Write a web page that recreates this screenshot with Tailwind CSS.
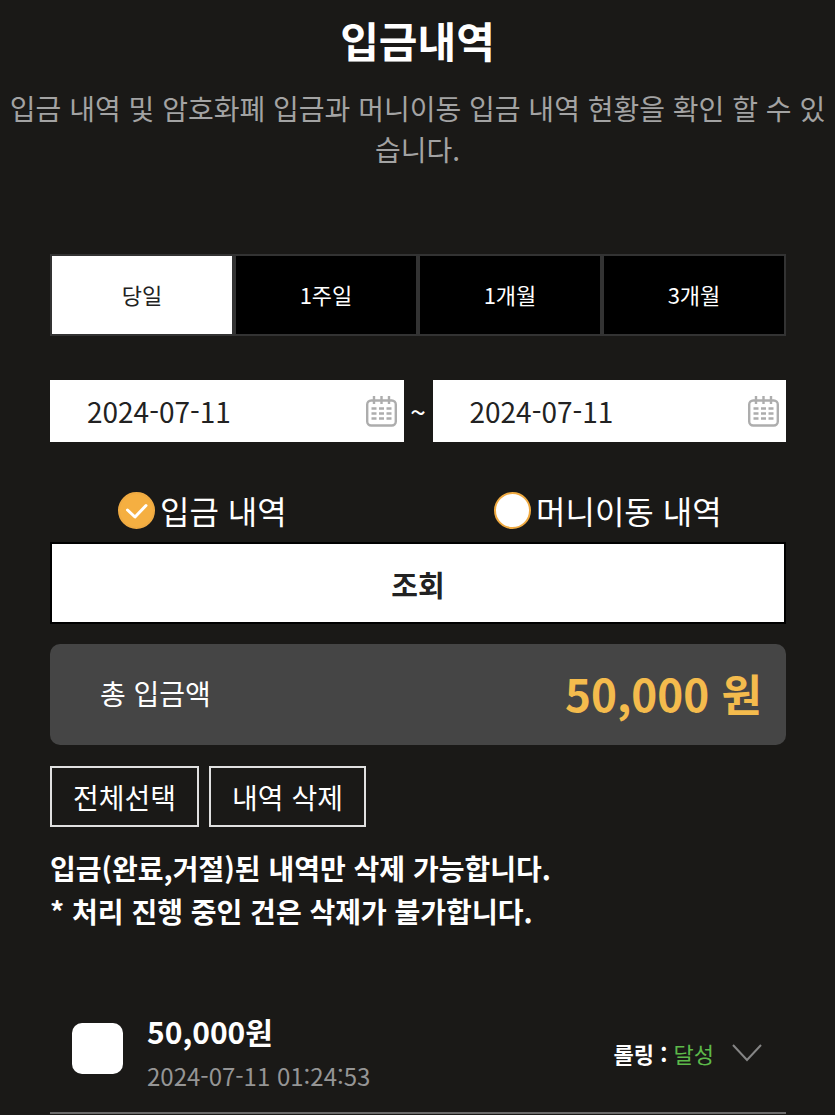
<!DOCTYPE html>
<html lang="ko">
<head>
  <meta charset="UTF-8">
  <meta name="viewport" content="width=device-width, initial-scale=1.0">
  <title>입금내역</title>
  <script src="https://cdn.jsdelivr.net/npm/@tailwindcss/browser@4"></script>
</head>
<body class="bg-[#1a1917] text-white font-['Noto_Sans_CJK_KR',sans-serif]">

  <!-- Title -->
  <header class="pt-[10px] text-center">
    <h1 class="text-[42px] leading-[60px] font-bold">입금내역</h1>
    <p class="mt-[18px] text-[28px] leading-[41px] break-all text-[#a3a3a3]">입금 내역 및 암호화폐 입금과 머니이동 입금 내역 현황을 확인 할 수 있습니다.</p>
  </header>

  <main class="pt-21 pr-[49px] pl-[50px]">
    <!-- Period -->
    <div class="grid grid-cols-4 text-[22px]">
      <button type="button" class="h-[82px] border-2 border-[#333] bg-white pb-[2px] text-[#222]">당일</button>
      <button type="button" class="h-[82px] border-2 border-[#333] bg-black pb-[2px]">1주일</button>
      <button type="button" class="h-[82px] border-2 border-[#333] bg-black pb-[2px]">1개월</button>
      <button type="button" class="h-[82px] border-2 border-[#333] bg-black pb-[2px]">3개월</button>
    </div>

    <!-- Date range -->
    <form>
      <div class="mt-11 flex items-center">
        <div class="relative flex-1">
          <input type="text" aria-label="시작일" value="2024-07-11" class="block h-[62px] w-full bg-white pl-[37px] text-[28px] text-[#222]">
          <svg class="absolute top-4 right-[7px] h-[31px] w-[31px]" viewBox="0 0 31 31" fill="none" stroke="#adadad" stroke-width="2.400" aria-hidden="true">
            <rect x="1.200" y="4.500" width="28.600" height="25" rx="4"/>
            <path d="M8 0v8M15.500 0v8M23 0v8"/>
            <path d="M5.500 12.500h5M13 12.500h5M20.500 12.500h5M5.500 17.500h5M13 17.500h5M20.500 17.500h5M5.500 22.500h5M13 22.500h5M20.500 22.500h5"/>
          </svg>
        </div>
        <span class="w-[29px] text-center text-[28px]">~</span>
        <div class="relative flex-1">
          <input type="text" aria-label="종료일" value="2024-07-11" class="block h-[62px] w-full bg-white pl-[37px] text-[28px] text-[#222]">
          <svg class="absolute top-4 right-[7px] h-[31px] w-[31px]" viewBox="0 0 31 31" fill="none" stroke="#adadad" stroke-width="2.400" aria-hidden="true">
            <rect x="1.200" y="4.500" width="28.600" height="25" rx="4"/>
            <path d="M8 0v8M15.500 0v8M23 0v8"/>
            <path d="M5.500 12.500h5M13 12.500h5M20.500 12.500h5M5.500 17.500h5M13 17.500h5M20.500 17.500h5M5.500 22.500h5M13 22.500h5M20.500 22.500h5"/>
          </svg>
        </div>
      </div>

      <!-- History type -->
      <div class="mt-11 grid grid-cols-2 gap-4 text-[32px] leading-[48px]">
        <label class="flex items-center gap-[5px] pl-17">
          <span class="relative h-[37px] w-[37px]">
            <input type="radio" name="type" checked class="peer block h-[37px] w-[37px] appearance-none rounded-full border-2 border-[#efaa42] bg-white checked:bg-[#f5af41]">
            <svg class="pointer-events-none absolute inset-0 hidden peer-checked:block" viewBox="0 0 37 37" fill="none" stroke="#fff" stroke-width="3" stroke-linecap="round" stroke-linejoin="round" aria-hidden="true"><path d="M9.500 18l7.500 7L28 13.500"/></svg>
          </span>
          입금 내역
        </label>
        <label class="flex items-center gap-[5px] pl-17">
          <span class="relative h-[37px] w-[37px]">
            <input type="radio" name="type" class="peer block h-[37px] w-[37px] appearance-none rounded-full border-2 border-[#efaa42] bg-white checked:bg-[#f5af41]">
            <svg class="pointer-events-none absolute inset-0 hidden peer-checked:block" viewBox="0 0 37 37" fill="none" stroke="#fff" stroke-width="3" stroke-linecap="round" stroke-linejoin="round" aria-hidden="true"><path d="M9.500 18l7.500 7L28 13.500"/></svg>
          </span>
          머니이동 내역
        </label>
      </div>
      <button type="button" class="mt-2 block h-[82px] w-full border-2 border-black bg-white pt-1 text-[29px] font-bold text-[#222]">조회</button>
    </form>

    <!-- Total -->
    <div class="mt-5 flex h-[101px] items-center justify-between rounded-[10px] bg-[#454545] pr-6 pb-1 pl-[50px]">
      <span class="text-[28px]">총 입금액</span>
      <strong class="text-[44px] font-bold text-[#f4bb4d]">50,000 원</strong>
    </div>

    <div class="mt-[21px] flex gap-[10px] text-[28px]">
      <button type="button" class="h-[61px] border-2 border-[#e0e0e0] px-[21px]">전체선택</button>
      <button type="button" class="h-[61px] border-2 border-[#e0e0e0] px-[21px]">내역 삭제</button>
    </div>

    <p class="mt-5 text-[28px] leading-[43px] font-bold">입금(완료,거절)된 내역만 삭제 가능합니다.<br>* 처리 진행 중인 건은 삭제가 불가합니다.</p>

    <!-- List -->
    <ul class="mt-16">
      <li class="flex items-center border-b-2 border-[#6b6b6b] pt-[11px] pr-6 pb-[14px] pl-[22px]">
        <input type="checkbox" aria-label="50,000원 내역 선택" class="mb-[10px] h-[51px] w-[51px] appearance-none rounded-[10px] bg-white checked:bg-[#f5af41]">
        <div class="ml-6 flex-1">
          <p class="text-[30px] leading-[46px] font-bold">50,000원</p>
          <p class="text-[24px] leading-[44px] text-[#959595]">2024-07-11 01:24:53</p>
        </div>
        <p class="text-[22px]"><b>롤링 :</b> <span class="text-[#5db94a]">달성</span></p>
        <button type="button" aria-label="상세 보기" class="ml-[18px]">
          <svg class="h-[18px] w-[30px]" viewBox="0 0 30 18" fill="none" stroke="#858585" stroke-width="2" aria-hidden="true"><path d="M1 1l14 15L29 1"/></svg>
        </button>
      </li>
    </ul>
  </main>
</body>
</html>
